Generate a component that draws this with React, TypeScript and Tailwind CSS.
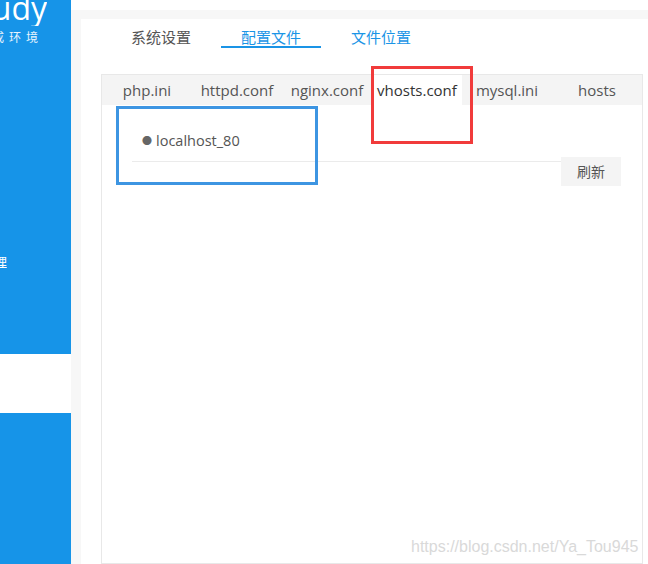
import React, { useState } from "react";

const font = { fontFamily: '"Open Sans", "Noto Sans CJK SC", sans-serif' };

const topTabs = ["系统设置", "配置文件", "文件位置"];
const fileTabs = ["php.ini", "httpd.conf", "nginx.conf", "vhosts.conf", "mysql.ini", "hosts"];

export default function App() {
  const [topTab, setTopTab] = useState(1);
  const [fileTab, setFileTab] = useState(3);

  return (
    <div className="relative flex h-[564px] w-[648px] overflow-hidden bg-white" style={font}>
      {/* sidebar, cut off on the left */}
      <div className="flex w-[71px] shrink-0 flex-col">
        <div className="flex h-[354px] flex-col bg-[#1694e8]">
          <div className="flex h-[26px] w-[47px] justify-end overflow-hidden">
            <span className="-mt-[9px] whitespace-nowrap text-[32px] leading-[34px] text-white">Study</span>
          </div>
          <div className="mt-[4px] flex w-[43px] justify-end overflow-hidden">
            <span className="whitespace-nowrap text-[12px] leading-[16px] tracking-[5px] text-white/90">集成环境</span>
          </div>
          <div className="mt-[208px] flex w-[7px] justify-end overflow-hidden">
            <span className="whitespace-nowrap text-[13px] leading-[16px] text-white">管理</span>
          </div>
        </div>
        <div className="h-[59px] bg-white"></div>
        <div className="flex-1 bg-[#1694e8]"></div>
      </div>

      {/* main */}
      <div className="flex flex-1 flex-col">
        <div className="h-[10px] overflow-hidden bg-white pl-[17px]">
          <span className="-mt-[12px] block text-[12px] leading-[14px] text-[#444]">设置</span>
        </div>
        <div className="flex flex-1 flex-col bg-[#f7f7f7] pl-[10px] pt-[9px]">
          <div className="flex flex-1 flex-col bg-white pl-[20px] pr-[7px]">
            {/* top tabs */}
            <div className="flex h-[55px] items-start gap-[10px] pl-[10px] pt-[10px]">
              {topTabs.map((t, i) => (
                <button
                  key={t}
                  onClick={() => setTopTab(i)}
                  className={`flex h-[19px] w-[100px] justify-center border-b-2 text-[15px] leading-[16px] ${
                    i === topTab ? "border-[#1a94e6] text-[#1a94e6]" : i === 0 ? "border-transparent text-[#555]" : "border-transparent text-[#1a94e6]"
                  }`}
                >
                  {t}
                </button>
              ))}
            </div>

            {/* file tabs panel */}
            <div className="flex flex-1 flex-col border border-[#e8e8e8]">
              <div className="flex h-[30px] bg-[#f4f4f4]">
                {fileTabs.map((t, i) => (
                  <button
                    key={t}
                    onClick={() => setFileTab(i)}
                    className={`flex w-[90px] items-center justify-center text-[15px] ${
                      i === fileTab ? "bg-white text-[#333]" : "text-[#555]"
                    }`}
                  >
                    {t}
                  </button>
                ))}
              </div>
              <div className="flex flex-col pl-[30px] pr-[21px] pt-[16px]">
                <div className="flex h-[41px] items-center border-b border-[#ebebeb] pl-[10px] text-[14.5px] text-[#555]">
                  <span className="mr-[4px] text-[10px] text-[#666]">●</span>
                  localhost_80
                </div>
                <div className="-mt-[5px] flex justify-end">
                  <button className="h-[29px] w-[60px] bg-[#f4f4f4] text-[14px] text-[#555]">刷新</button>
                </div>
              </div>
            </div>
          </div>
        </div>
      </div>

      {/* annotation boxes */}
      <div className="pointer-events-none absolute left-[116px] top-[106px] h-[79px] w-[202px] border-[3px] border-[#3d95e2]"></div>
      <div className="pointer-events-none absolute left-[371px] top-[66px] h-[78px] w-[102px] border-[3px] border-[#f13b3b]"></div>

      {/* watermark */}
      <div
        className="pointer-events-none absolute left-[411px] top-[535px] text-[16px] text-[#d9d9d9]"
        style={{ fontFamily: '"Liberation Sans", Arial, sans-serif' }}
      >
        https://blog.csdn.net/Ya_Tou945
      </div>
    </div>
  );
}
